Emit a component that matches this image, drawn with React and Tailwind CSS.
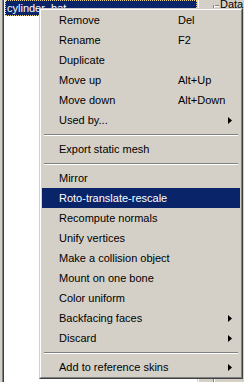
import React from 'react'

const MENU = [
  { label: 'Remove', key: 'Del' },
  { label: 'Rename', key: 'F2' },
  { label: 'Duplicate' },
  { label: 'Move up', key: 'Alt+Up' },
  { label: 'Move down', key: 'Alt+Down' },
  { label: 'Used by...', sub: true },
  { sep: true },
  { label: 'Export static mesh' },
  { sep: true },
  { label: 'Mirror' },
  { label: 'Roto-translate-rescale', active: true },
  { label: 'Recompute normals' },
  { label: 'Unify vertices' },
  { label: 'Make a collision object' },
  { label: 'Mount on one bone' },
  { label: 'Color uniform' },
  { label: 'Backfacing faces', sub: true },
  { label: 'Discard', sub: true },
  { sep: true },
  { label: 'Add to reference skins', sub: true },
]

function Arrow({ white }) {
  return (
    <svg width="4" height="7" viewBox="0 0 4 7" className="absolute left-[186px] top-[7px]">
      <path d="M0 0 L4 3.5 L0 7 Z" fill={white ? '#fff' : '#000'} />
    </svg>
  )
}

function MenuItem({ item }) {
  if (item.sep) {
    return (
      <div className="h-[9px] flex flex-col justify-center px-[2px]">
        <div className="h-px bg-[#808080]" />
        <div className="h-px bg-white" />
      </div>
    )
  }
  return (
    <div className={`relative h-[20px] flex items-center ${item.active ? 'bg-[#0a246a] text-white' : 'text-black'}`}>
      <span className="pl-[17px] w-[136px] shrink-0 whitespace-nowrap">{item.label}</span>
      {item.key && <span className="whitespace-nowrap">{item.key}</span>}
      {item.sub && <Arrow white={item.active} />}
    </div>
  )
}

export default function App() {
  return (
    <div className="relative w-[244px] h-[382px] overflow-hidden bg-[#d4d0c8] text-[11px] leading-none" style={{ fontFamily: '"Liberation Sans", Arial, sans-serif' }}>
      <div className="flex h-full">
        {/* list box */}
        <div className="flex h-full pl-[2px]">
          <div className="w-px bg-[#808080]" />
          <div className="w-px bg-[#404040]" />
          <div className="w-[193px] bg-white pl-px">
            <div className="h-[16px] bg-[#0a246a] outline outline-1 outline-dotted outline-[#f0d880] -outline-offset-1 flex items-center pl-[2px] text-white">
              cylinder_hat
            </div>
          </div>
          <div className="w-px bg-[#d4d0c8]" />
          <div className="w-px bg-white" />
        </div>
        {/* right panel with group box */}
        <div className="flex-1 relative">
          <div className="ml-[14px] mt-[5px] h-full flex">
            <div className="w-px bg-[#808080]" />
            <div className="w-px bg-white" />
            <div className="flex items-start">
              <div className="w-[4px] mt-0">
                <div className="h-px bg-[#808080]" />
                <div className="h-px bg-white" />
              </div>
              <span className="-mt-[6px] pl-[1px] text-black text-[11px]">Data</span>
            </div>
          </div>
        </div>
      </div>

      {/* context menu */}
      <div className="absolute left-[39px] top-[8px] w-[204px] border-t border-l border-[#d4d0c8] border-r border-b border-r-[#404040] border-b-[#404040]">
        <div className="border-t border-l border-white border-r border-b border-r-[#808080] border-b-[#808080] bg-[#d4d0c8] px-px">
          {MENU.map((item, i) => (
            <MenuItem key={i} item={item} />
          ))}
        </div>
      </div>
    </div>
  )
}
